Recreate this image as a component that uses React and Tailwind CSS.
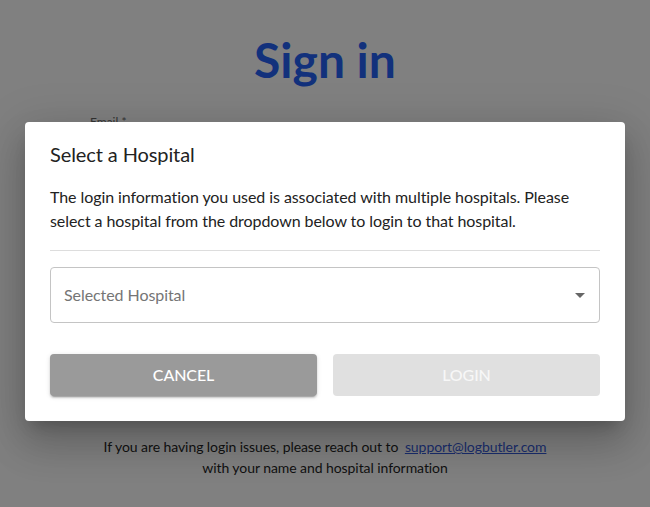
export default function App() {
  return (
    <div className="relative h-[507px] w-full overflow-hidden bg-[#808080]" style={{ fontFamily: "Lato, 'Open Sans', sans-serif" }}>
      <div className="flex flex-col items-center pt-[28px]">
        <h1 className="text-[48px] font-bold leading-[64px] text-[#12317c]">Sign in</h1>
        <div className="mt-[22px] w-[470px] text-[12px] leading-[16px] text-[#333]">Email *</div>
      </div>

      <div className="absolute left-0 right-0 top-[436px] flex flex-col items-center text-[14px] leading-[21px] tracking-[-0.07px] text-[#111]">
        <div>
          If you are having login issues, please reach out to{" "}
          <a className="ml-[3px] text-[#1a2e6e] underline">support@logbutler.com</a>
        </div>
        <div>with your name and hospital information</div>
      </div>

      <div className="absolute inset-0 flex justify-center">
        <div className="mt-[122px] h-fit w-[600px] rounded-[4px] bg-white px-[25px] pb-[25px] pt-[18px] shadow-[0_11px_15px_-7px_rgba(0,0,0,0.2),0_24px_38px_3px_rgba(0,0,0,0.14),0_9px_46px_8px_rgba(0,0,0,0.12)]">
          <h2 className="text-[20px] leading-[28px] tracking-[-0.1px] text-[#222]">Select a Hospital</h2>
          <p className="mt-[17px] text-[16px] leading-[24px] tracking-[-0.07px] text-[#222]">
            The login information you used is associated with multiple hospitals. Please select a hospital from the dropdown below to login to that hospital.
          </p>
          <div className="mt-[17px] h-px bg-[#dddddd]" />
          <div className="mt-[16px] flex h-[56px] items-center justify-between rounded-[4px] border border-[#c4c4c4] pl-[13px] pr-[14px]">
            <span className="text-[16px] tracking-[-0.07px] text-[#757575]">Selected Hospital</span>
            <svg width="10" height="5" viewBox="0 0 10 5">
              <path d="M0 0 L10 0 L5 5 Z" fill="#666" />
            </svg>
          </div>
          <div className="mt-[31px] grid grid-cols-2 gap-[16px]">
            <button className="h-[42px] rounded-[4px] bg-[#9a9a9a] text-[16px] font-medium tracking-[-0.1px] text-white shadow-[0_3px_1px_-2px_rgba(0,0,0,0.2),0_2px_2px_0_rgba(0,0,0,0.14),0_1px_5px_0_rgba(0,0,0,0.12)]">
              CANCEL
            </button>
            <button className="h-[42px] rounded-[4px] bg-[#e0e0e0] text-[16px] font-medium tracking-[-0.1px] text-[#f7f7f7]">
              LOGIN
            </button>
          </div>
        </div>
      </div>
    </div>
  );
}
